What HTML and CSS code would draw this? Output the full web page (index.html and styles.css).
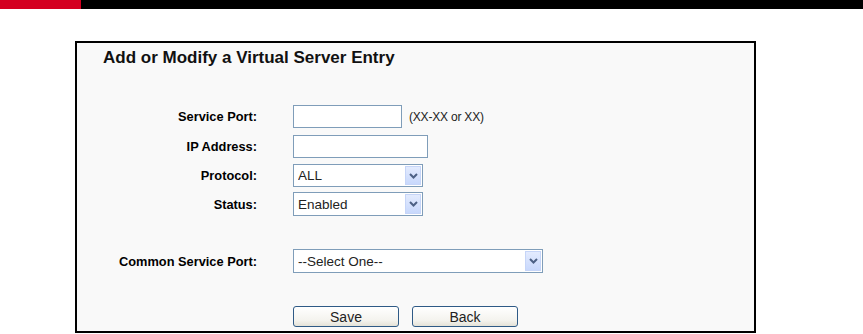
FILE: index.html
```html
<!DOCTYPE html>
<html lang="en">
<head>
    <meta charset="UTF-8">
    <title>Virtual Servers</title>
    <link rel="stylesheet" href="styles.css">
</head>
<body>
    <div class="topbar">
        <div class="topbar-red"></div>
        <div class="topbar-black"></div>
    </div>

    <div class="panel">
        <h1 class="panel-title">Add or Modify a Virtual Server Entry</h1>

        <form class="entry-form">
            <div class="form-row row-port">
                <label class="field-label">Service Port:</label>
                <input type="text" class="text-input port-input">
                <span class="hint">(XX-XX or XX)</span>
            </div>

            <div class="form-row row-ip">
                <label class="field-label">IP Address:</label>
                <input type="text" class="text-input ip-input">
            </div>

            <div class="form-row row-protocol">
                <label class="field-label">Protocol:</label>
                <span class="select-wrap small-select">
                    <select>
                        <option>ALL</option>
                        <option>TCP</option>
                        <option>UDP</option>
                    </select>
                    <span class="select-arrow"><svg width="9" height="6" viewBox="0 0 9 6"><path d="M1 1 L4.5 4.5 L8 1" fill="none" stroke="#4d6185" stroke-width="2"/></svg></span>
                </span>
            </div>

            <div class="form-row row-status">
                <label class="field-label">Status:</label>
                <span class="select-wrap small-select">
                    <select>
                        <option>Enabled</option>
                        <option>Disabled</option>
                    </select>
                    <span class="select-arrow"><svg width="9" height="6" viewBox="0 0 9 6"><path d="M1 1 L4.5 4.5 L8 1" fill="none" stroke="#4d6185" stroke-width="2"/></svg></span>
                </span>
            </div>

            <div class="form-row row-common">
                <label class="field-label">Common Service Port:</label>
                <span class="select-wrap wide-select">
                    <select>
                        <option>--Select One--</option>
                    </select>
                    <span class="select-arrow"><svg width="9" height="6" viewBox="0 0 9 6"><path d="M1 1 L4.5 4.5 L8 1" fill="none" stroke="#4d6185" stroke-width="2"/></svg></span>
                </span>
            </div>

            <div class="form-row row-buttons">
                <span class="field-label"></span>
                <div class="buttons">
                    <button type="button" class="btn">Save</button>
                    <button type="button" class="btn">Back</button>
                </div>
            </div>
        </form>
    </div>
</body>
</html>
```

FILE: styles.css
```css
body {
    margin: 0;
    background: #fff;
    font-family: "Liberation Sans", Arial, sans-serif;
    color: #000;
}
.topbar {
    display: flex;
    height: 9px;
}
.topbar-red {
    width: 81px;
    background-color: #d40021;
}
.topbar-black {
    flex: 1;
    background-color: #000;
}
.panel {
    margin: 32px 0 0 75px;
    width: 677px;
    height: 288px;
    border: 2px solid #000;
    background-color: #f9f9f9;
}
.panel-title {
    margin: 0;
    padding: 5px 0 0 26px;
    font-size: 17px;
    font-weight: bold;
    line-height: 20px;
    height: 20px;
    color: #111;
}
.entry-form {
    margin-top: 37px;
}
.form-row {
    display: flex;
    align-items: center;
    height: 23px;
}
.row-port { margin-bottom: 7px; }
.row-ip { margin-bottom: 6px; }
.row-protocol { margin-bottom: 5px; }
.row-status { height: 24px; margin-bottom: 33px; }
.row-common { height: 24px; margin-bottom: 33px; }
.row-buttons { height: 21px; }
.field-label {
    width: 180px;
    flex: none;
    margin-right: 36px;
    text-align: right;
    font-size: 12.8px;
    font-weight: bold;
}
.text-input {
    box-sizing: border-box;
    height: 23px;
    border: 1px solid #7f9db9;
    background: #fff;
    padding: 0 3px;
    margin: 0;
    font-size: 13px;
    font-family: "Liberation Sans", Arial, sans-serif;
}
.port-input {
    width: 109px;
}
.ip-input {
    width: 135px;
}
.hint {
    margin-left: 7px;
    font-size: 12px;
    letter-spacing: -0.2px;
    color: #222;
}
.select-wrap {
    position: relative;
    display: inline-block;
    height: 100%;
}
.select-wrap select {
    -webkit-appearance: none;
    appearance: none;
    box-sizing: border-box;
    width: 100%;
    height: 100%;
    margin: 0;
    padding: 0 0 0 4px;
    border: 1px solid #7f9db9;
    border-radius: 0;
    background: #fff;
    font-size: 13.5px;
    font-weight: normal;
    font-family: "Liberation Sans", Arial, sans-serif;
    color: #222;
}
.small-select {
    width: 130px;
}
.wide-select {
    width: 250px;
}
.select-arrow {
    position: absolute;
    top: 2px;
    bottom: 2px;
    right: 2px;
    width: 16px;
    box-sizing: border-box;
    border: 1px solid #c6d5f8;
    background: linear-gradient(#e3ebfe, #c8d8fc);
    display: flex;
    align-items: center;
    justify-content: center;
    pointer-events: none;
}
.buttons {
    display: flex;
    gap: 13px;
    height: 100%;
}
.btn {
    box-sizing: border-box;
    width: 106px;
    height: 100%;
    margin: 0;
    padding: 0;
    border: 1px solid #2f5a86;
    border-radius: 3px;
    background: linear-gradient(#ffffff, #f4f3ee 70%, #e4e2d8);
    font-size: 14px;
    font-weight: normal;
    font-family: "Liberation Sans", Arial, sans-serif;
    color: #222;
}
```
